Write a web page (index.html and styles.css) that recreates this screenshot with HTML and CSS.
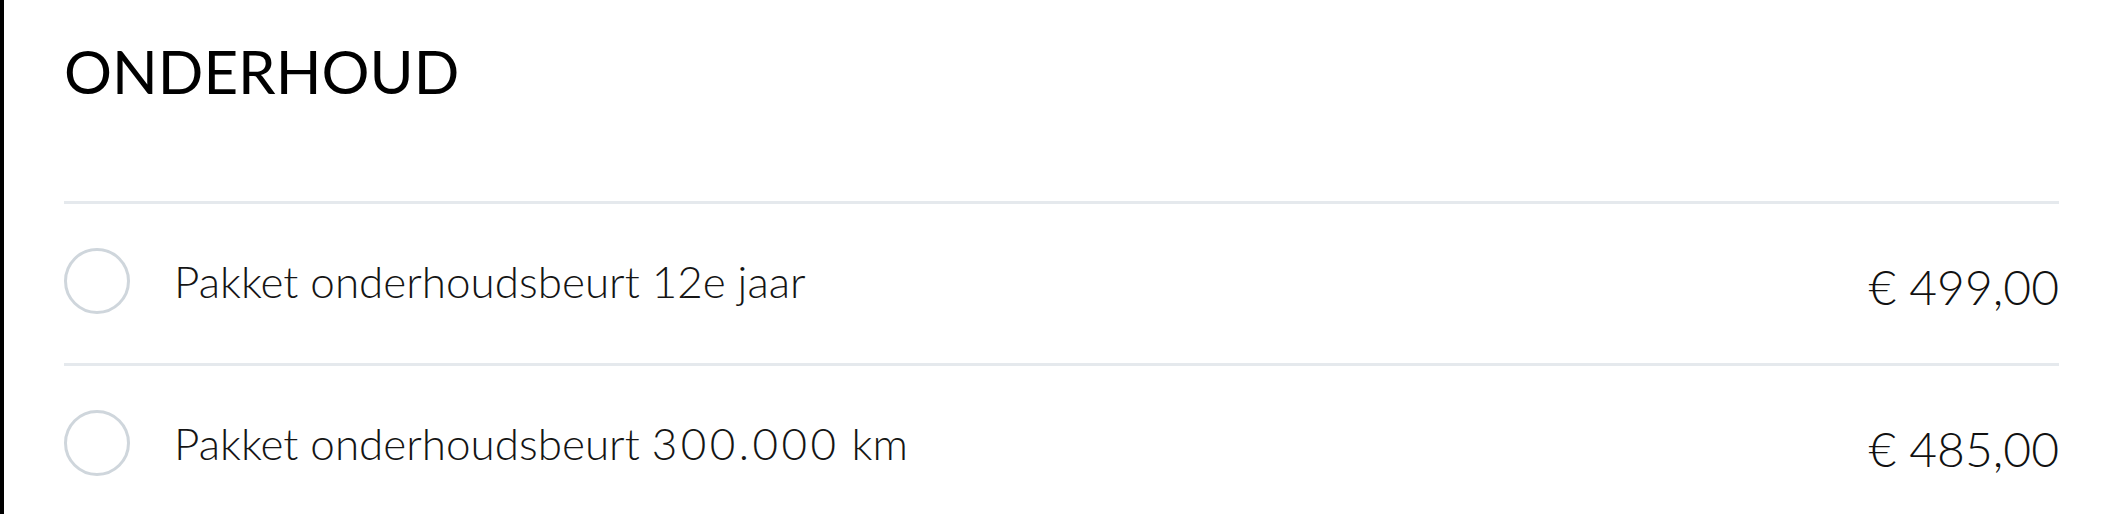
FILE: index.html
```html
<!DOCTYPE html>
<html lang="nl">
<head>
<meta charset="utf-8">
<title>Onderhoud</title>
<link rel="stylesheet" href="styles.css">
</head>
<body>
<div class="page">
  <section class="section">
    <h2 class="title">ONDERHOUD</h2>
    <ul class="list">
      <li class="row">
        <span class="radio"></span>
        <span class="label">Pakket onderhoudsbeurt 12e jaar</span>
        <span class="price">€ 499,00</span>
      </li>
      <li class="row">
        <span class="radio"></span>
        <span class="label">Pakket onderhoudsbeurt <span class="num">300.000</span> km</span>
        <span class="price">€ 485,00</span>
      </li>
    </ul>
  </section>
</div>
</body>
</html>
```
FILE: styles.css
```css
html, body {
  margin: 0;
  padding: 0;
  background: #ffffff;
}
.page {
  border-left: 4px solid #000000;
  min-height: 514px;
  box-sizing: border-box;
  padding: 35px 59px 0 60px;
  font-family: "Lato", "Liberation Sans", sans-serif;
  color: #111111;
}
.title {
  margin: 0;
  font-size: 60px;
  font-weight: 400;
  line-height: 72px;
  letter-spacing: 0;
  color: #000000;
}
.list {
  list-style: none;
  margin: 94px 0 0 0;
  padding: 0;
}
.row {
  display: flex;
  align-items: center;
  height: 154px;
  border-top: 3px solid #e5e9ed;
  padding-bottom: 5px;
  box-sizing: content-box;
}
.radio {
  flex: none;
  width: 60px;
  height: 60px;
  border: 3px solid #cfd6dc;
  border-radius: 50%;
}
.label {
  flex: 1;
  margin-left: 44px;
  font-size: 44px;
  font-weight: 300;
  color: #151515;
}
.num {
  letter-spacing: 3.5px;
}
.price {
  flex: none;
  margin-top: 10px;
  font-size: 48px;
  font-weight: 300;
  color: #111111;
}
```
